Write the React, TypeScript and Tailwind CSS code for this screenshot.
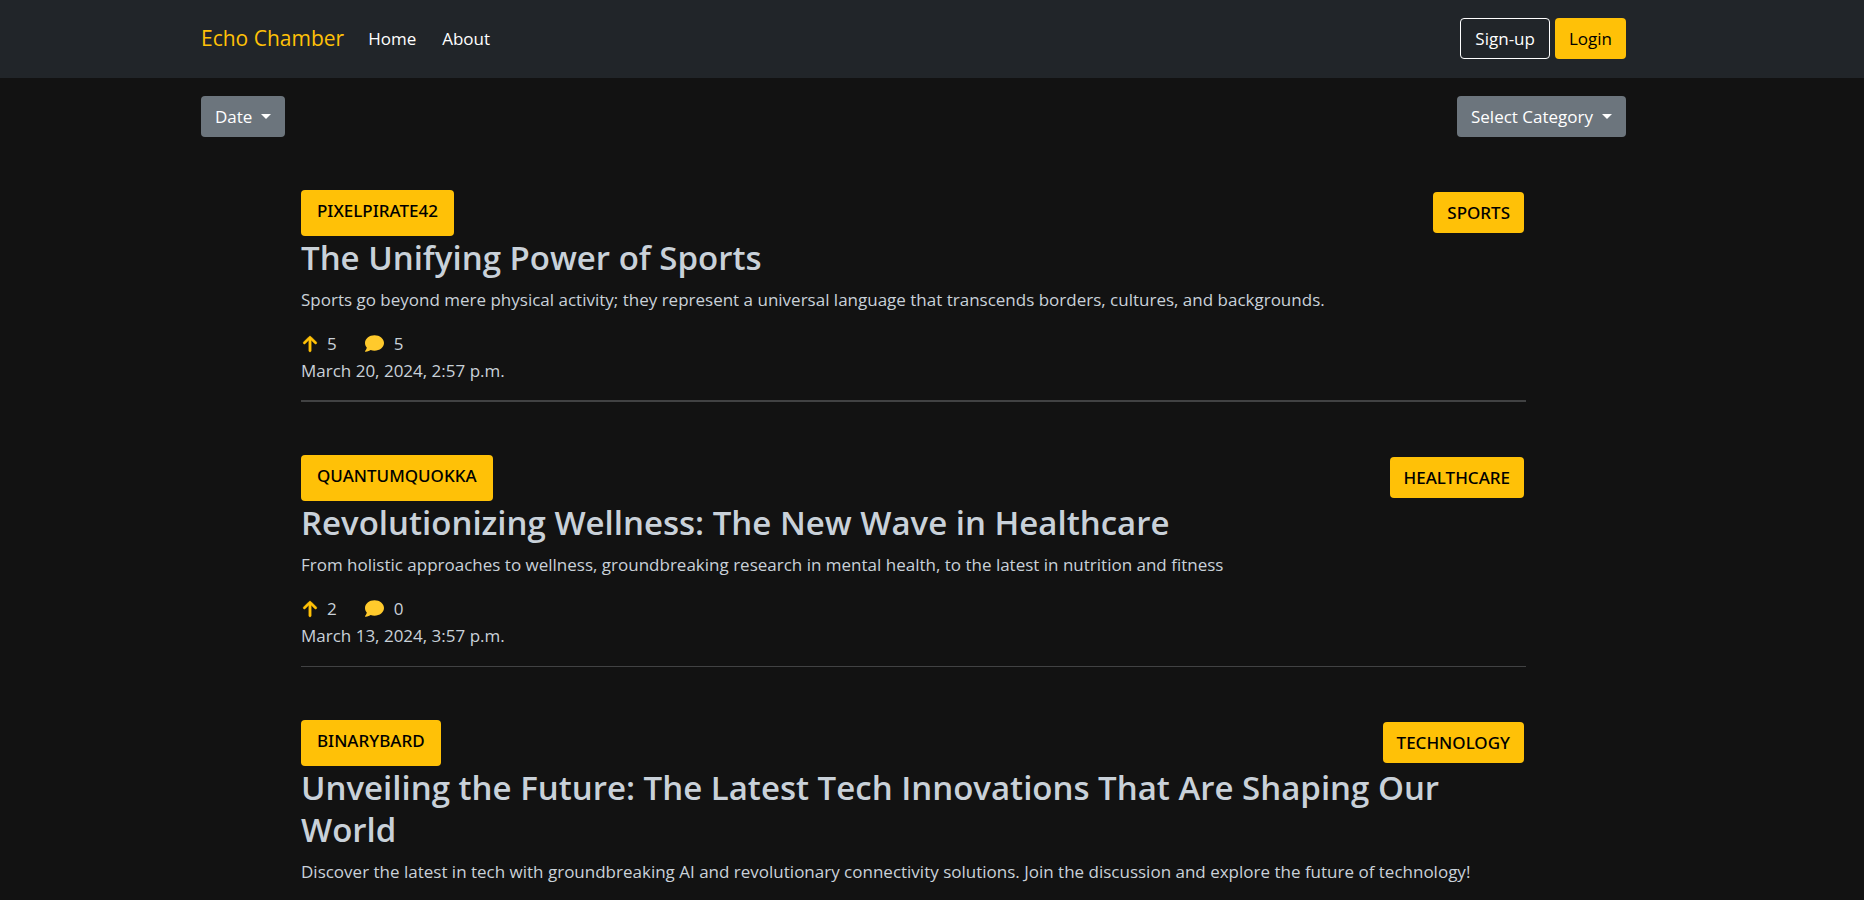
import { FaArrowUp, FaComment } from "react-icons/fa6";

type Post = {
  author: string;
  category: string;
  title: string;
  summary: string;
  activity?: { votes: number; comments: number; date: string };
};

const posts: Post[] = [
  {
    author: "PIXELPIRATE42",
    category: "SPORTS",
    title: "The Unifying Power of Sports",
    summary:
      "Sports go beyond mere physical activity; they represent a universal language that transcends borders, cultures, and backgrounds.",
    activity: { votes: 5, comments: 5, date: "March 20, 2024, 2:57 p.m." },
  },
  {
    author: "QUANTUMQUOKKA",
    category: "HEALTHCARE",
    title: "Revolutionizing Wellness: The New Wave in Healthcare",
    summary:
      "From holistic approaches to wellness, groundbreaking research in mental health, to the latest in nutrition and fitness",
    activity: { votes: 2, comments: 0, date: "March 13, 2024, 3:57 p.m." },
  },
  {
    author: "BINARYBARD",
    category: "TECHNOLOGY",
    title: "Unveiling the Future: The Latest Tech Innovations That Are Shaping Our World",
    summary:
      "Discover the latest in tech with groundbreaking AI and revolutionary connectivity solutions. Join the discussion and explore the future of technology!",
  },
];

function DropdownButton({ label }: { label: string }) {
  return (
    <button
      type="button"
      aria-haspopup="menu"
      className="flex h-[41px] items-center gap-[9px] rounded bg-[#6c757d] px-[14px] text-white"
    >
      {label}
      <svg width="10" height="5" viewBox="0 0 10 5" fill="currentColor" aria-hidden="true">
        <path d="M0 0h10L5 5z" />
      </svg>
    </button>
  );
}

function PostItem({ post }: { post: Post }) {
  return (
    <article className="group">
      <div className="flex items-start justify-between pr-[2px] font-['Noto_Sans',sans-serif] font-medium text-black">
        <a href="#author" className="h-[46px] rounded bg-[#ffc107] px-4 pt-[7px]">
          {post.author}
        </a>
        <a href="#category" className="mt-[2px] h-[41px] rounded bg-[#ffc107] px-[14px] pt-[7px]">
          {post.category}
        </a>
      </div>
      <h2 className="mt-px mb-2 text-[33px] leading-[42px] font-semibold">{post.title}</h2>
      <p className="leading-[26px]">{post.summary}</p>
      {post.activity && (
        <div className="border-b border-[#414243] pt-[17px] pb-[17px] group-first:border-b-2 group-first:pb-4">
          <div className="flex h-[27px] items-center">
            <button type="button" aria-label="Upvote" className="text-[#ffc107]">
              <FaArrowUp size={18} strokeWidth={16} stroke="currentColor" />
            </button>
            <span className="ml-2">{post.activity.votes}</span>
            <a href="#comments" aria-label="Comments" className="ml-7 text-[#ffca2c]">
              <FaComment size={19} />
            </a>
            <span className="ml-[10px]">{post.activity.comments}</span>
          </div>
          <time className="block">{post.activity.date}</time>
        </div>
      )}
    </article>
  );
}

export default function App() {
  return (
    <div className="min-h-screen bg-[#121212] font-['Open_Sans',sans-serif] text-[17px] leading-[27px] text-[#c9d1d9]">
      <header className="bg-[#212529] pr-[37px]">
        <div className="mx-auto flex max-w-[1425px] items-center pt-[18px] pb-[19px]">
          <a href="#top" className="mr-6 text-[21px] text-[#ffc107]">
            Echo Chamber
          </a>
          <nav className="flex gap-[26px] text-white">
            <a href="#home">Home</a>
            <a href="#about">About</a>
          </nav>
          <div className="ml-auto flex gap-[5px]">
            <button type="button" className="h-[41px] rounded border border-white px-[14px] text-white">
              Sign-up
            </button>
            <button type="button" className="h-[41px] rounded bg-[#ffc107] px-[14px] text-black">
              Login
            </button>
          </div>
        </div>
      </header>
      <div className="pr-[37px]">
        <div className="mx-auto max-w-[1425px] pt-[18px]">
          <div className="flex justify-between">
            <DropdownButton label="Date" />
            <DropdownButton label="Select Category" />
          </div>
          <main className="flex flex-col gap-[53px] px-[100px] pt-[53px]">
            {posts.map((post) => (
              <PostItem key={post.author} post={post} />
            ))}
          </main>
        </div>
      </div>
    </div>
  );
}
